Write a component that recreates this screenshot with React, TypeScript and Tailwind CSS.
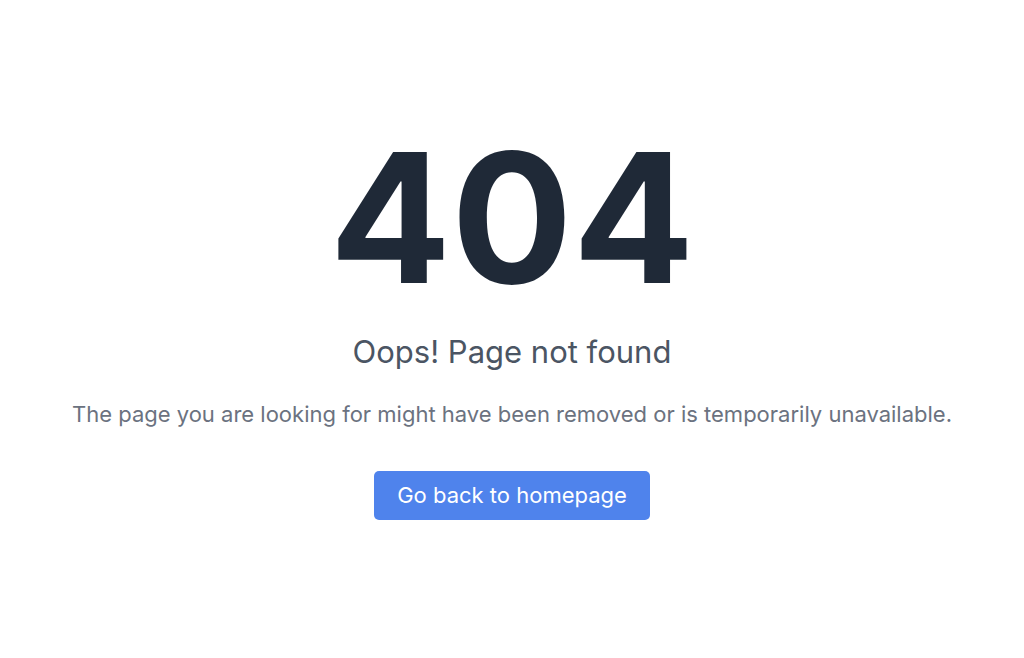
import React from 'react';

const App: React.FC = () => {
    return (
        <div
            className="min-h-screen w-full bg-white flex flex-col items-center justify-center text-center pb-[11px]"
            style={{ fontFamily: 'Inter, "Noto Sans", sans-serif' }}
        >
            <h1 className="text-[180px] leading-none font-bold text-[#1f2937]">404</h1>
            <h2 className="mt-[26px] text-[31px] leading-[36px] text-[#4b5563]">Oops! Page not found</h2>
            <p className="mt-[30px] text-[22px] leading-[28px] text-[#6b7280]">
                The page you are looking for might have been removed or is temporarily unavailable.
            </p>
            <a
                href="#"
                className="mt-[43px] inline-flex items-center justify-center h-[49px] px-[23px] rounded-[5px] bg-[#4f83ec] text-white text-[22px]"
            >
                Go back to homepage
            </a>
        </div>
    );
};

export default App;
